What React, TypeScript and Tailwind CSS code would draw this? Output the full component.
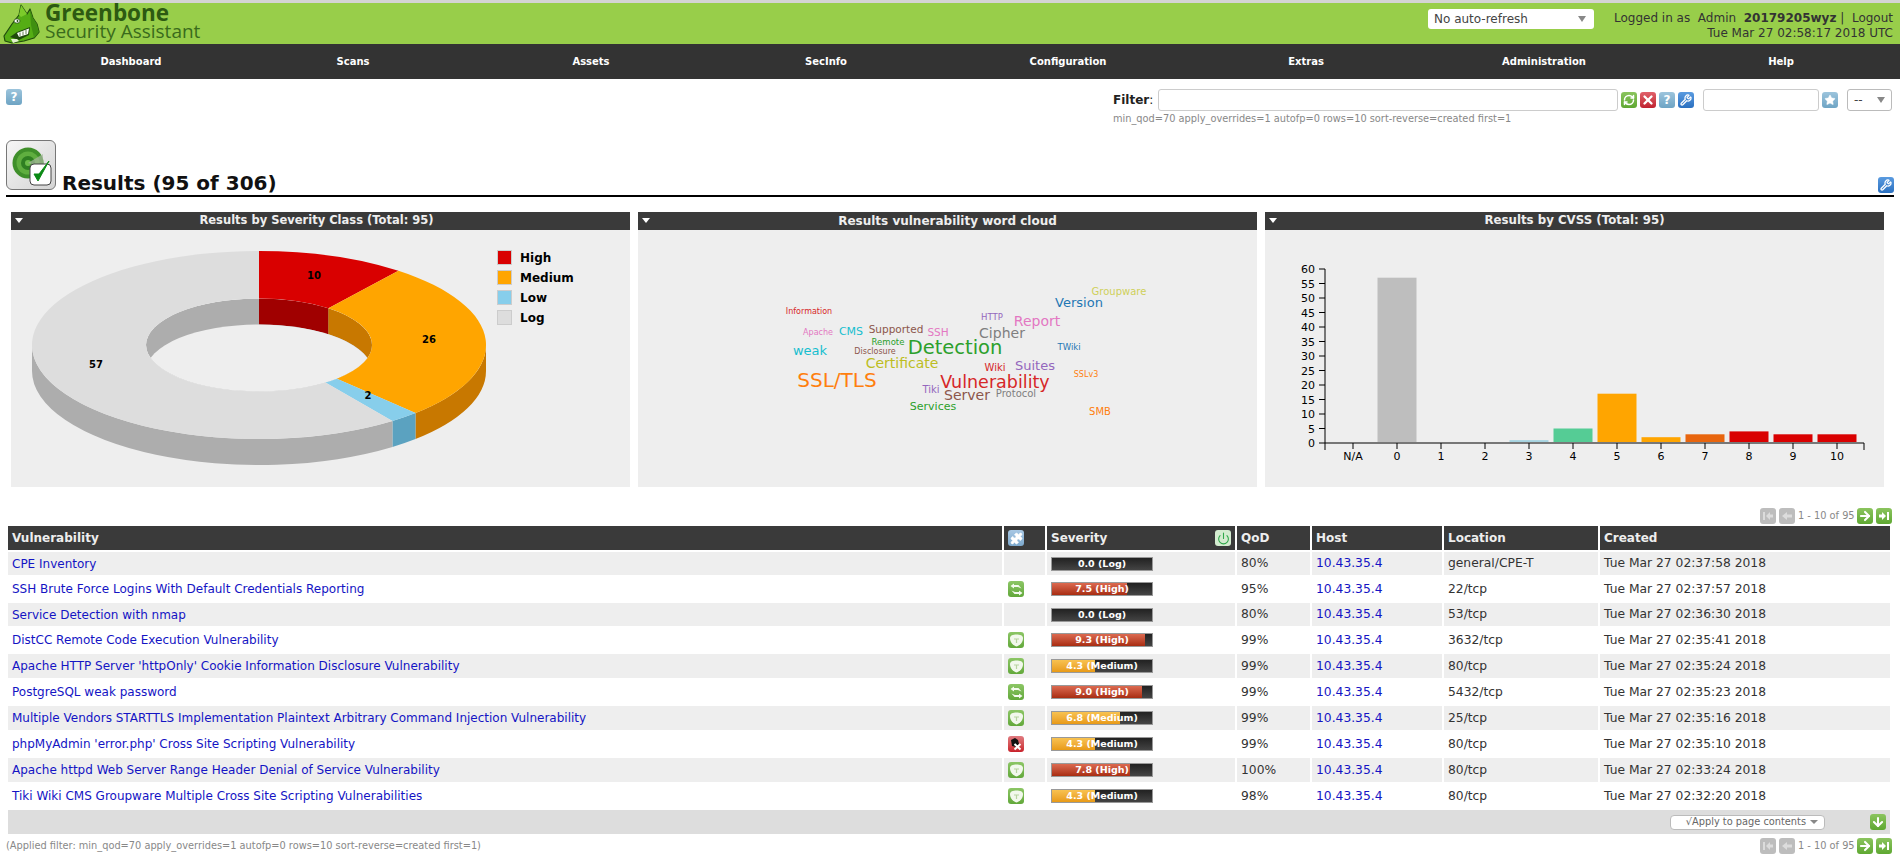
import type { ReactNode } from "react";
import { ArrowDown, ArrowRight, Power, Puzzle, RefreshCw, Star, Wrench, X } from "lucide-react";

const navItems = [
  ["Dashboard", "pl-[16px] w-[246px]"],
  ["Scans", "w-[214px]"],
  ["Assets", "w-[262px]"],
  ["SecInfo", "w-[208px]"],
  ["Configuration", "w-[276px]"],
  ["Extras", "w-[200px]"],
  ["Administration", "w-[276px]"],
  ["Help", "w-[198px]"],
];

type Row = {
  name: string;
  solution?: "alt" | "fix" | "none";
  score: number;
  label: string;
  qod: string;
  location: string;
  created: string;
  short?: boolean;
};

const rows: Row[] = [
  { name: "CPE Inventory", score: 0, label: "0.0 (Log)", qod: "80%", location: "general/CPE-T", created: "Tue Mar 27 02:37:58 2018", short: true },
  { name: "SSH Brute Force Logins With Default Credentials Reporting", solution: "alt", score: 7.5, label: "7.5 (High)", qod: "95%", location: "22/tcp", created: "Tue Mar 27 02:37:57 2018" },
  { name: "Service Detection with nmap", score: 0, label: "0.0 (Log)", qod: "80%", location: "53/tcp", created: "Tue Mar 27 02:36:30 2018", short: true },
  { name: "DistCC Remote Code Execution Vulnerability", solution: "fix", score: 9.3, label: "9.3 (High)", qod: "99%", location: "3632/tcp", created: "Tue Mar 27 02:35:41 2018" },
  { name: "Apache HTTP Server 'httpOnly' Cookie Information Disclosure Vulnerability", solution: "fix", score: 4.3, label: "4.3 (Medium)", qod: "99%", location: "80/tcp", created: "Tue Mar 27 02:35:24 2018" },
  { name: "PostgreSQL weak password", solution: "alt", score: 9.0, label: "9.0 (High)", qod: "99%", location: "5432/tcp", created: "Tue Mar 27 02:35:23 2018" },
  { name: "Multiple Vendors STARTTLS Implementation Plaintext Arbitrary Command Injection Vulnerability", solution: "fix", score: 6.8, label: "6.8 (Medium)", qod: "99%", location: "25/tcp", created: "Tue Mar 27 02:35:16 2018" },
  { name: "phpMyAdmin 'error.php' Cross Site Scripting Vulnerability", solution: "none", score: 4.3, label: "4.3 (Medium)", qod: "99%", location: "80/tcp", created: "Tue Mar 27 02:35:10 2018" },
  { name: "Apache httpd Web Server Range Header Denial of Service Vulnerability", solution: "fix", score: 7.8, label: "7.8 (High)", qod: "100%", location: "80/tcp", created: "Tue Mar 27 02:33:24 2018" },
  { name: "Tiki Wiki CMS Groupware Multiple Cross Site Scripting Vulnerabilities", solution: "fix", score: 4.3, label: "4.3 (Medium)", qod: "98%", location: "80/tcp", created: "Tue Mar 27 02:32:20 2018" },
];

// x / baseline y relative to the word cloud panel body
const words: [string, number, number, number, string][] = [
  ["SSL/TLS", 199, 157, 20, "#ff7f0e"],
  ["Detection", 317, 124, 19.5, "#2ca02c"],
  ["Vulnerability", 357, 158, 17.5, "#d62728"],
  ["Certificate", 264, 137.5, 14, "#bcbd22"],
  ["Cipher", 364, 107.5, 14, "#7f7f7f"],
  ["Report", 399, 95.5, 14, "#e377c2"],
  ["Version", 441, 76.5, 13, "#1f77b4"],
  ["Groupware", 481, 64.5, 10, "#cfd05a"],
  ["Information", 171, 83.5, 8, "#d62728"],
  ["HTTP", 354, 89.5, 8.5, "#9467bd"],
  ["Apache", 180, 104.5, 8, "#e377c2"],
  ["CMS", 213, 104.5, 11, "#17becf"],
  ["Supported", 258, 102.5, 10.5, "#8c564b"],
  ["SSH", 300, 105.5, 10.5, "#e377c2"],
  ["Remote", 250, 114.5, 8.5, "#2ca02c"],
  ["Disclosure", 237, 123.5, 8, "#8c564b"],
  ["weak", 172, 124.5, 13, "#17becf"],
  ["TWiki", 431, 119.5, 8.5, "#1f77b4"],
  ["Wiki", 357, 140.5, 10, "#d62728"],
  ["Suites", 397, 139.5, 13, "#9467bd"],
  ["SSLv3", 448, 146.5, 8, "#ff7f0e"],
  ["Tiki", 293, 162.5, 10, "#9467bd"],
  ["Server", 329, 169.5, 14, "#8c564b"],
  ["Protocol", 378, 166.5, 10, "#7f7f7f"],
  ["Services", 295, 179.5, 11, "#2ca02c"],
  ["SMB", 462, 184.5, 10, "#ff7f0e"],
];

const cvss = [
  ["N/A", 0, ""],
  ["0", 57, "#bebebe"],
  ["1", 0, ""],
  ["2", 0, ""],
  ["3", 1, "#a6d3e0"],
  ["4", 5, "#55cc95"],
  ["5", 17, "#ffa500"],
  ["6", 2, "#ffa500"],
  ["7", 3, "#e8650e"],
  ["8", 4, "#d90000"],
  ["9", 3, "#d90000"],
  ["10", 3, "#d90000"],
] as const;

const slices = [
  { value: 10, top: "#d90000", side: "#a00000" },
  { value: 26, top: "#ffa500", side: "#c87800" },
  { value: 2, top: "#87ceeb", side: "#5ba2c0" },
  { value: 57, top: "#dddddd", side: "#adadad" },
];

const legend = [
  ["High", "bg-[#d90000]"],
  ["Medium", "bg-[#ffa500]"],
  ["Low", "bg-[#87ceeb]"],
  ["Log", "bg-[#dddddd]"],
];

function IconBox({ className, children }: { className: string; children: ReactNode }) {
  return (
    <span className={`flex h-4 w-4 shrink-0 items-center justify-center rounded-[3px] text-white ${className}`}>
      {children}
    </span>
  );
}

const green = "bg-linear-to-b from-[#8bc45e] to-[#5ea831]";
const blue = "bg-linear-to-b from-[#9cc4dc] to-[#6ea4c4]";
const strongBlue = "bg-linear-to-b from-[#5a9be0] to-[#2a70c0]";
const gray = "bg-[#bdbdbd]";

function Pager() {
  return (
    <div className="flex items-center gap-[3px] text-[9.8px] text-[#888]">
      <IconBox className={gray}>
        <svg width="12" height="10" viewBox="0 0 12 10" fill="#dcdcdc"><path d="M1 1h2v8H1zM11 3.500H8V1L4 5l4 4V6.500h3z" /></svg>
      </IconBox>
      <IconBox className={gray}>
        <svg width="12" height="10" viewBox="0 0 12 10" fill="#dcdcdc"><path d="M11 3.500H6V1L1 5l5 4V6.500h5z" /></svg>
      </IconBox>
      <span className="w-[56px] whitespace-nowrap">1 - 10 of 95</span>
      <IconBox className={green}>
        <ArrowRight size={14} strokeWidth={3.5} />
      </IconBox>
      <IconBox className={green}>
        <svg width="12" height="10" viewBox="0 0 12 10" fill="white"><path d="M11 1H9v8h2zM1 3.500h3V1l4 4-4 4V6.500H1z" /></svg>
      </IconBox>
    </div>
  );
}

function SolutionIcon({ kind }: { kind?: Row["solution"] }) {
  if (kind === "alt") {
    return (
      <IconBox className="bg-linear-to-b from-[#8cc665] to-[#62a83a]">
        <svg width="15" height="15" viewBox="0 0 15 15" fill="#f4faee">
          <path d="M1.500 4L5 1.500V3h4.500l3 3.500-3.500-1.500H5v1.500z" />
          <path d="M13.500 11L10 13.500V12H5.500l-3-3.500L6 10h4V8.500z" />
        </svg>
      </IconBox>
    );
  }
  if (kind === "fix") {
    return (
      <IconBox className="bg-linear-to-b from-[#8cc665] to-[#62a83a]">
        <svg width="15" height="15" viewBox="0 0 15 15">
          <path d="M1 5C1 2.500 4 1.500 7.500 1.500S14 2.500 14 5C14 9 11 12.500 7.500 13.500 4 12.500 1 9 1 5z" fill="#f2f8ec" />
          <path d="M5 6h5M7.500 6v4" stroke="#b8d4a0" strokeWidth="1.200" />
        </svg>
      </IconBox>
    );
  }
  if (kind === "none") {
    return (
      <IconBox className="bg-linear-to-b from-[#e07a80] to-[#c81e2a]">
        <svg width="15" height="15" viewBox="0 0 15 15">
          <path d="M2 3l4-2 3 2 1 4-3 3-4-1z" fill="#111" />
          <path d="M5.500 7l6 5.500M11.500 7l-6 5.500" stroke="white" strokeWidth="2" />
        </svg>
      </IconBox>
    );
  }
  return null;
}

function SeverityBar({ score, label }: { score: number; label: string }) {
  const fill =
    score >= 7
      ? "bg-linear-to-b from-[#dc6a50] to-[#a82c10]"
      : "bg-linear-to-b from-[#f8c250] to-[#e89a14]";
  return (
    <div className="relative h-[14px] w-[102px] border border-[#999] bg-linear-to-b from-[#222] to-[#444]">
      <div className={`h-full ${fill}`} style={{ width: `${score * 10}%` }} />
      <span className="absolute inset-0 text-center text-[9.5px] leading-[12px] font-bold whitespace-nowrap text-white">
        {label}
      </span>
    </div>
  );
}

function Panel({ title, titleClass, children }: { title: string; titleClass: string; children: ReactNode }) {
  return (
    <div className="w-[619px] shrink-0">
      <div className={`relative flex h-[18px] items-center justify-center bg-[#3a3a3a] font-bold text-[#eee] ${titleClass}`}>
        <span className="absolute top-[6px] left-[4px] h-0 w-0 border-x-[4px] border-t-[5px] border-x-transparent border-t-white" />
        {title}
      </div>
      <div className="h-[257px] bg-[#eeeeee]">{children}</div>
    </div>
  );
}

function Donut() {
  const cx = 248;
  const cy = 115;
  const [rx, ry, hx, hy, depth] = [227, 94, 113, 46.5, 26];
  const pt = (a: number, x: number, y: number, dy = 0) =>
    `${(cx + x * Math.sin(a)).toFixed(2)} ${(cy + dy - y * Math.cos(a)).toFixed(2)}`;

  const arcs: { start: number; end: number; top: string; side: string }[] = [];
  let acc = 0;
  for (const s of slices) {
    const start = (acc / 95) * Math.PI * 2;
    acc += s.value;
    arcs.push({ start, end: (acc / 95) * Math.PI * 2, top: s.top, side: s.side });
  }

  const wall = (start: number, end: number, x: number, y: number) => {
    const large = end - start > Math.PI ? 1 : 0;
    return `M${pt(start, x, y)} A${x} ${y} 0 ${large} 1 ${pt(end, x, y)} L${pt(end, x, y, depth)} A${x} ${y} 0 ${large} 0 ${pt(start, x, y, depth)} Z`;
  };
  const top = (start: number, end: number) => {
    const large = end - start > Math.PI ? 1 : 0;
    return `M${pt(start, rx, ry)} A${rx} ${ry} 0 ${large} 1 ${pt(end, rx, ry)} L${pt(end, hx, hy)} A${hx} ${hy} 0 ${large} 0 ${pt(start, hx, hy)} Z`;
  };

  return (
    <svg width="619" height="257" className="block font-['DejaVu_Sans',sans-serif]">
      <defs>
        <clipPath id="hole">
          <ellipse cx={cx} cy={cy} rx={hx} ry={hy} />
        </clipPath>
      </defs>
      {/* outer wall only shows on the front half */}
      {arcs.map((s, i) => {
        const from = Math.max(s.start, Math.PI / 2);
        const to = Math.min(s.end, (Math.PI * 3) / 2);
        return to > from ? <path key={i} d={wall(from, to, rx, ry)} fill={s.side} /> : null;
      })}
      <g clipPath="url(#hole)">
        <ellipse cx={cx} cy={cy} rx={hx} ry={hy} fill="#adadad" />
        {arcs.slice(0, 2).map((s, i) => (
          <path key={i} d={wall(s.start, Math.min(s.end, Math.PI / 2), hx, hy)} fill={s.side} />
        ))}
        <ellipse cx={cx} cy={cy + depth} rx={hx} ry={hy} fill="#eeeeee" />
      </g>
      {arcs.map((s, i) => (
        <path key={i} d={top(s.start, s.end)} fill={s.top} />
      ))}
      <g fontSize="10" fontWeight="bold" textAnchor="middle" fill="#000">
        <text x="303" y="49">10</text>
        <text x="418" y="113">26</text>
        <text x="357" y="169">2</text>
        <text x="85" y="138">57</text>
      </g>
    </svg>
  );
}

function WordCloud() {
  return (
    <svg width="619" height="257" className="block font-['DejaVu_Sans',sans-serif]">
      {words.map(([w, x, y, size, color]) => (
        <text key={w} x={x} y={y} fontSize={size} fill={color} textAnchor="middle">
          {w}
        </text>
      ))}
    </svg>
  );
}

function BarChart() {
  // axis origin in panel coordinates
  const ax = 60;
  const y0 = 213;
  const unit = 174 / 60;
  const step = 44;
  const first = 88;
  return (
    <svg width="619" height="257" className="block font-['DejaVu_Sans',sans-serif]">
      {cvss.map(([name, value, color], i) =>
        value > 0 ? (
          <rect
            key={name}
            x={first + i * step - 19.500}
            y={y0 - value * unit}
            width="39"
            height={value * unit - 1}
            fill={color}
          />
        ) : null
      )}
      <path d={`M${ax} ${y0 - 174}V${y0}H599`} fill="none" stroke="#000" strokeWidth="1" />
      <path d={`M${ax} ${y0}v7M599 ${y0}v7`} stroke="#000" />
      {Array.from({ length: 13 }, (_, i) => i * 5).map((v) => (
        <g key={v}>
          <path d={`M${ax - 6} ${y0 - v * unit}H${ax}`} stroke="#000" />
          <text x={ax - 10} y={y0 - v * unit + 4} fontSize="11" textAnchor="end">
            {v}
          </text>
        </g>
      ))}
      {cvss.map(([name], i) => (
        <g key={name}>
          <path d={`M${first + i * step} ${y0}v6`} stroke="#000" />
          <text x={first + i * step} y={y0 + 17} fontSize="11" textAnchor="middle">
            {name}
          </text>
        </g>
      ))}
    </svg>
  );
}

function Logo() {
  return (
    <svg width="40" height="40" viewBox="0 0 40 40" className="shrink-0">
      {/* head */}
      <path d="M1 32 L9 20 L16 11 L18 1 L24 10 L27 5 L30 14 L34 20 L36 28 L31 34 L21 37 L9 39 L2 37 Z" fill="#55ad14" stroke="#1f4a0c" strokeWidth="1.200" strokeLinejoin="round" />
      {/* ear */}
      <path d="M18 1l6 9-6 3-2-2z" fill="#7ccb2a" />
      <path d="M27 5l3 9 4 6 2 8-5 6-3-13z" fill="#3f8f10" />
      {/* mouth */}
      <path d="M7 33 L14 28 L27 23 L26 31 L16 36 Z" fill="#1f4a0c" />
      <path d="M14 29 L26 24.500 L25 30 L16 33Z" fill="#fff" />
      <path d="M17 28.500v4M20 27.500v4M23 26v4" stroke="#1f4a0c" strokeWidth="0.700" />
      <path d="M8 35l6 0 2 2-6 2z" fill="#e4f2d0" />
      {/* eye */}
      <ellipse cx="14" cy="17" rx="3" ry="2.200" fill="#fff" stroke="#1f4a0c" strokeWidth="0.800" />
      <circle cx="14.500" cy="17" r="0.900" fill="#1f4a0c" />
    </svg>
  );
}

function SectionIcon() {
  return (
    <div className="h-[50px] w-[50px] shrink-0 rounded-[6px] border border-[#777] bg-linear-to-br from-[#f6f6f6] to-[#d4d4d4]">
      <svg width="48" height="48" viewBox="0 0 48 48">
        <circle cx="21" cy="22" r="15.500" fill="#3f8f2a" />
        <circle cx="21" cy="22" r="11.500" fill="#5fae3f" />
        <circle cx="21" cy="22" r="7" fill="#2f7f22" />
        <circle cx="21" cy="22" r="3" fill="#6cbc4a" />
        <path d="M21 22L36 13V26z" fill="#a8b8a0" opacity="0.7" />
        <rect x="23" y="23" width="21" height="21" rx="4" fill="#fff" stroke="#444" strokeWidth="1" />
        <path d="M27 33l4 7 11-20-10 13z" fill="#0a8a14" stroke="#0a8a14" />
      </svg>
    </div>
  );
}

export default function App() {
  return (
    <div className="min-h-[866px] bg-white font-['DejaVu_Sans',sans-serif] text-[12px] text-[#333]">
      <div className="h-[3px] bg-[#d4d4d4]" />
      <header className="flex h-[41px] items-start bg-[#98ce4a]">
        <div className="mt-[1px] ml-[3px] flex gap-[2px]">
          <Logo />
          <div className="-mt-[1px] font-['Open_Sans',sans-serif]">
            <div className="text-[22.5px] leading-[20px] font-bold text-[#2d5a12]">Greenbone</div>
            <div className="text-[19px] leading-[17px] text-[#3a6b1c]">Security Assistant</div>
          </div>
        </div>
        <div className="mt-[6px] ml-auto flex h-[20px] w-[166px] items-center justify-between rounded-[3px] bg-white pr-[8px] pl-[6px] text-[12px] text-[#444]">
          No auto-refresh
          <span className="h-0 w-0 border-x-[4px] border-t-[6px] border-x-transparent border-t-[#888]" />
        </div>
        <div className="mt-[8px] mr-[7px] w-[299px] text-right text-[12px] leading-[15px] text-[#333]">
          <div className="whitespace-pre">
            Logged in as  Admin  <b>20179205wyz</b> |  Logout
          </div>
          <div>Tue Mar 27 02:58:17 2018 UTC</div>
        </div>
      </header>
      <nav className="flex h-[35px] items-center bg-[#333] text-[10px] font-bold text-white">
        {navItems.map(([label, width]) => (
          <div key={label} className={`shrink-0 text-center ${width}`}>
            {label}
          </div>
        ))}
      </nav>

      <div className="mt-[10px] flex h-[36px] items-start px-[6px]">
        <IconBox className={blue}>
          <span className="text-[12px] font-bold">?</span>
        </IconBox>
        <div className="ml-auto w-[781px]">
          <div className="flex h-[22px] items-center">
            <span className="w-[45px] text-[12px] text-[#222]">
              <b>Filter</b>:
            </span>
            <div className="h-[22px] w-[460px] rounded-[3px] border border-[#ccc] bg-white" />
            <div className="ml-[3px] flex gap-[3px]">
              <IconBox className={green}>
                <RefreshCw size={12} strokeWidth={3} />
              </IconBox>
              <IconBox className="bg-linear-to-b from-[#e0606a] to-[#c02030]">
                <X size={14} strokeWidth={4} />
              </IconBox>
              <IconBox className={blue}>
                <span className="text-[12px] font-bold">?</span>
              </IconBox>
              <IconBox className={strongBlue}>
                <Wrench size={12} strokeWidth={2.5} />
              </IconBox>
            </div>
            <div className="ml-[9px] h-[22px] w-[116px] rounded-[3px] border border-[#ccc] bg-white" />
            <div className="ml-[3px]">
              <IconBox className={blue}>
                <Star size={12} fill="white" strokeWidth={1} />
              </IconBox>
            </div>
            <div className="ml-[9px] flex h-[22px] w-[45px] items-center justify-between rounded-[3px] border border-[#bbb] bg-white px-[6px] text-[#444]">
              --
              <span className="h-0 w-0 border-x-[4px] border-t-[6px] border-x-transparent border-t-[#888]" />
            </div>
          </div>
          <div className="mt-[1px] text-[9.8px] leading-[14px] text-[#888]">
            min_qod=70 apply_overrides=1 autofp=0 rows=10 sort-reverse=created first=1
          </div>
        </div>
      </div>

      <div className="mx-[6px] mt-[15px] flex h-[57px] items-end border-b-2 border-black pb-[5px]">
        <SectionIcon />
        <h1 className="-mb-[4px] ml-[6px] text-[20px] leading-[22px] font-bold whitespace-nowrap text-[#111]">
          Results (95 of 306)
        </h1>
        <div className="ml-auto -mb-[3px]">
          <IconBox className={strongBlue}>
            <Wrench size={12} strokeWidth={2.5} />
          </IconBox>
        </div>
      </div>

      <div className="mt-[15px] ml-[11px] flex gap-[8px]">
        <Panel title="Results by Severity Class (Total: 95)" titleClass="pr-[8px] text-[11.5px]">
          <div className="relative">
            <Donut />
            <ul className="absolute top-[20px] left-[486px] text-[12px] font-bold text-black">
              {legend.map(([label, color]) => (
                <li key={label} className="mb-[5px] flex h-[15px] items-center gap-[8px]">
                  <span className={`h-[15px] w-[15px] border border-[#ccc] ${color}`} />
                  {label}
                </li>
              ))}
            </ul>
          </div>
        </Panel>
        <Panel title="Results vulnerability word cloud" titleClass="text-[12px]">
          <WordCloud />
        </Panel>
        <Panel title="Results by CVSS (Total: 95)" titleClass="text-[11.8px]">
          <BarChart />
        </Panel>
      </div>

      <div className="mt-[21px] flex h-[16px] justify-end pr-[8px]">
        <Pager />
      </div>

      <table className="ml-[6px] w-[1886px] table-fixed border-separate border-spacing-[2px] text-[12.3px]">
        <colgroup>
          <col className="w-[994px]" />
          <col className="w-[41px]" />
          <col className="w-[188px]" />
          <col className="w-[73px]" />
          <col className="w-[130px]" />
          <col className="w-[154px]" />
          <col />
        </colgroup>
        <thead>
          <tr className="h-[24px] text-left text-[12px] font-bold text-[#eee]">
            <th className="bg-[#3a3a3a] px-[4px]">Vulnerability</th>
            <th className="bg-[#3a3a3a] px-[4px]">
              <IconBox className="bg-linear-to-b from-[#a8c8e4] to-[#7ca8cc]">
                <Puzzle size={13} fill="white" strokeWidth={1} />
              </IconBox>
            </th>
            <th className="bg-[#3a3a3a] px-[4px]">
              <div className="flex items-center justify-between">
                Severity
                <IconBox className="bg-[#d4ecd0]">
                  <Power size={13} strokeWidth={2} color="#2fa84a" />
                </IconBox>
              </div>
            </th>
            <th className="bg-[#3a3a3a] px-[4px]">QoD</th>
            <th className="bg-[#3a3a3a] px-[4px]">Host</th>
            <th className="bg-[#3a3a3a] px-[4px]">Location</th>
            <th className="bg-[#3a3a3a] px-[4px]">Created</th>
          </tr>
        </thead>
        <tbody>
          {rows.map((r, i) => {
            const bg = i % 2 === 0 ? "bg-[#eeeeee]" : "bg-white";
            return (
              <tr key={r.name + i} className={r.short ? "h-[23px]" : "h-[24px]"}>
                <td className={`${bg} px-[4px] text-[12px] whitespace-nowrap text-[#1414c4]`}>{r.name}</td>
                <td className={`${bg} px-[4px]`}>
                  <SolutionIcon kind={r.solution} />
                </td>
                <td className={`${bg} px-[4px]`}>
                  <SeverityBar score={r.score} label={r.label} />
                </td>
                <td className={`${bg} px-[4px]`}>{r.qod}</td>
                <td className={`${bg} px-[4px] text-[#1414c4]`}>10.43.35.4</td>
                <td className={`${bg} px-[4px]`}>{r.location}</td>
                <td className={`${bg} px-[4px]`}>{r.created}</td>
              </tr>
            );
          })}
          <tr className="h-[24px]">
            <td colSpan={7} className="bg-[#dddddd] px-[4px]">
              <div className="flex items-center justify-end">
                <div className="flex h-[15px] w-[155px] items-center justify-end gap-[4px] rounded-[4px] border border-[#bbb] bg-white pr-[6px] text-[9.8px] text-[#666]">
                  √Apply to page contents
                  <span className="h-0 w-0 border-x-[4px] border-t-[4px] border-x-transparent border-t-[#888]" />
                </div>
                <div className="ml-[45px]">
                  <IconBox className={green}>
                    <ArrowDown size={14} strokeWidth={3.5} />
                  </IconBox>
                </div>
              </div>
            </td>
          </tr>
        </tbody>
      </table>

      <div className="mt-[2px] flex h-[16px] items-center justify-between pr-[8px] pl-[6px]">
        <span className="text-[9.8px] text-[#888]">
          (Applied filter: min_qod=70 apply_overrides=1 autofp=0 rows=10 sort-reverse=created first=1)
        </span>
        <Pager />
      </div>
    </div>
  );
}
